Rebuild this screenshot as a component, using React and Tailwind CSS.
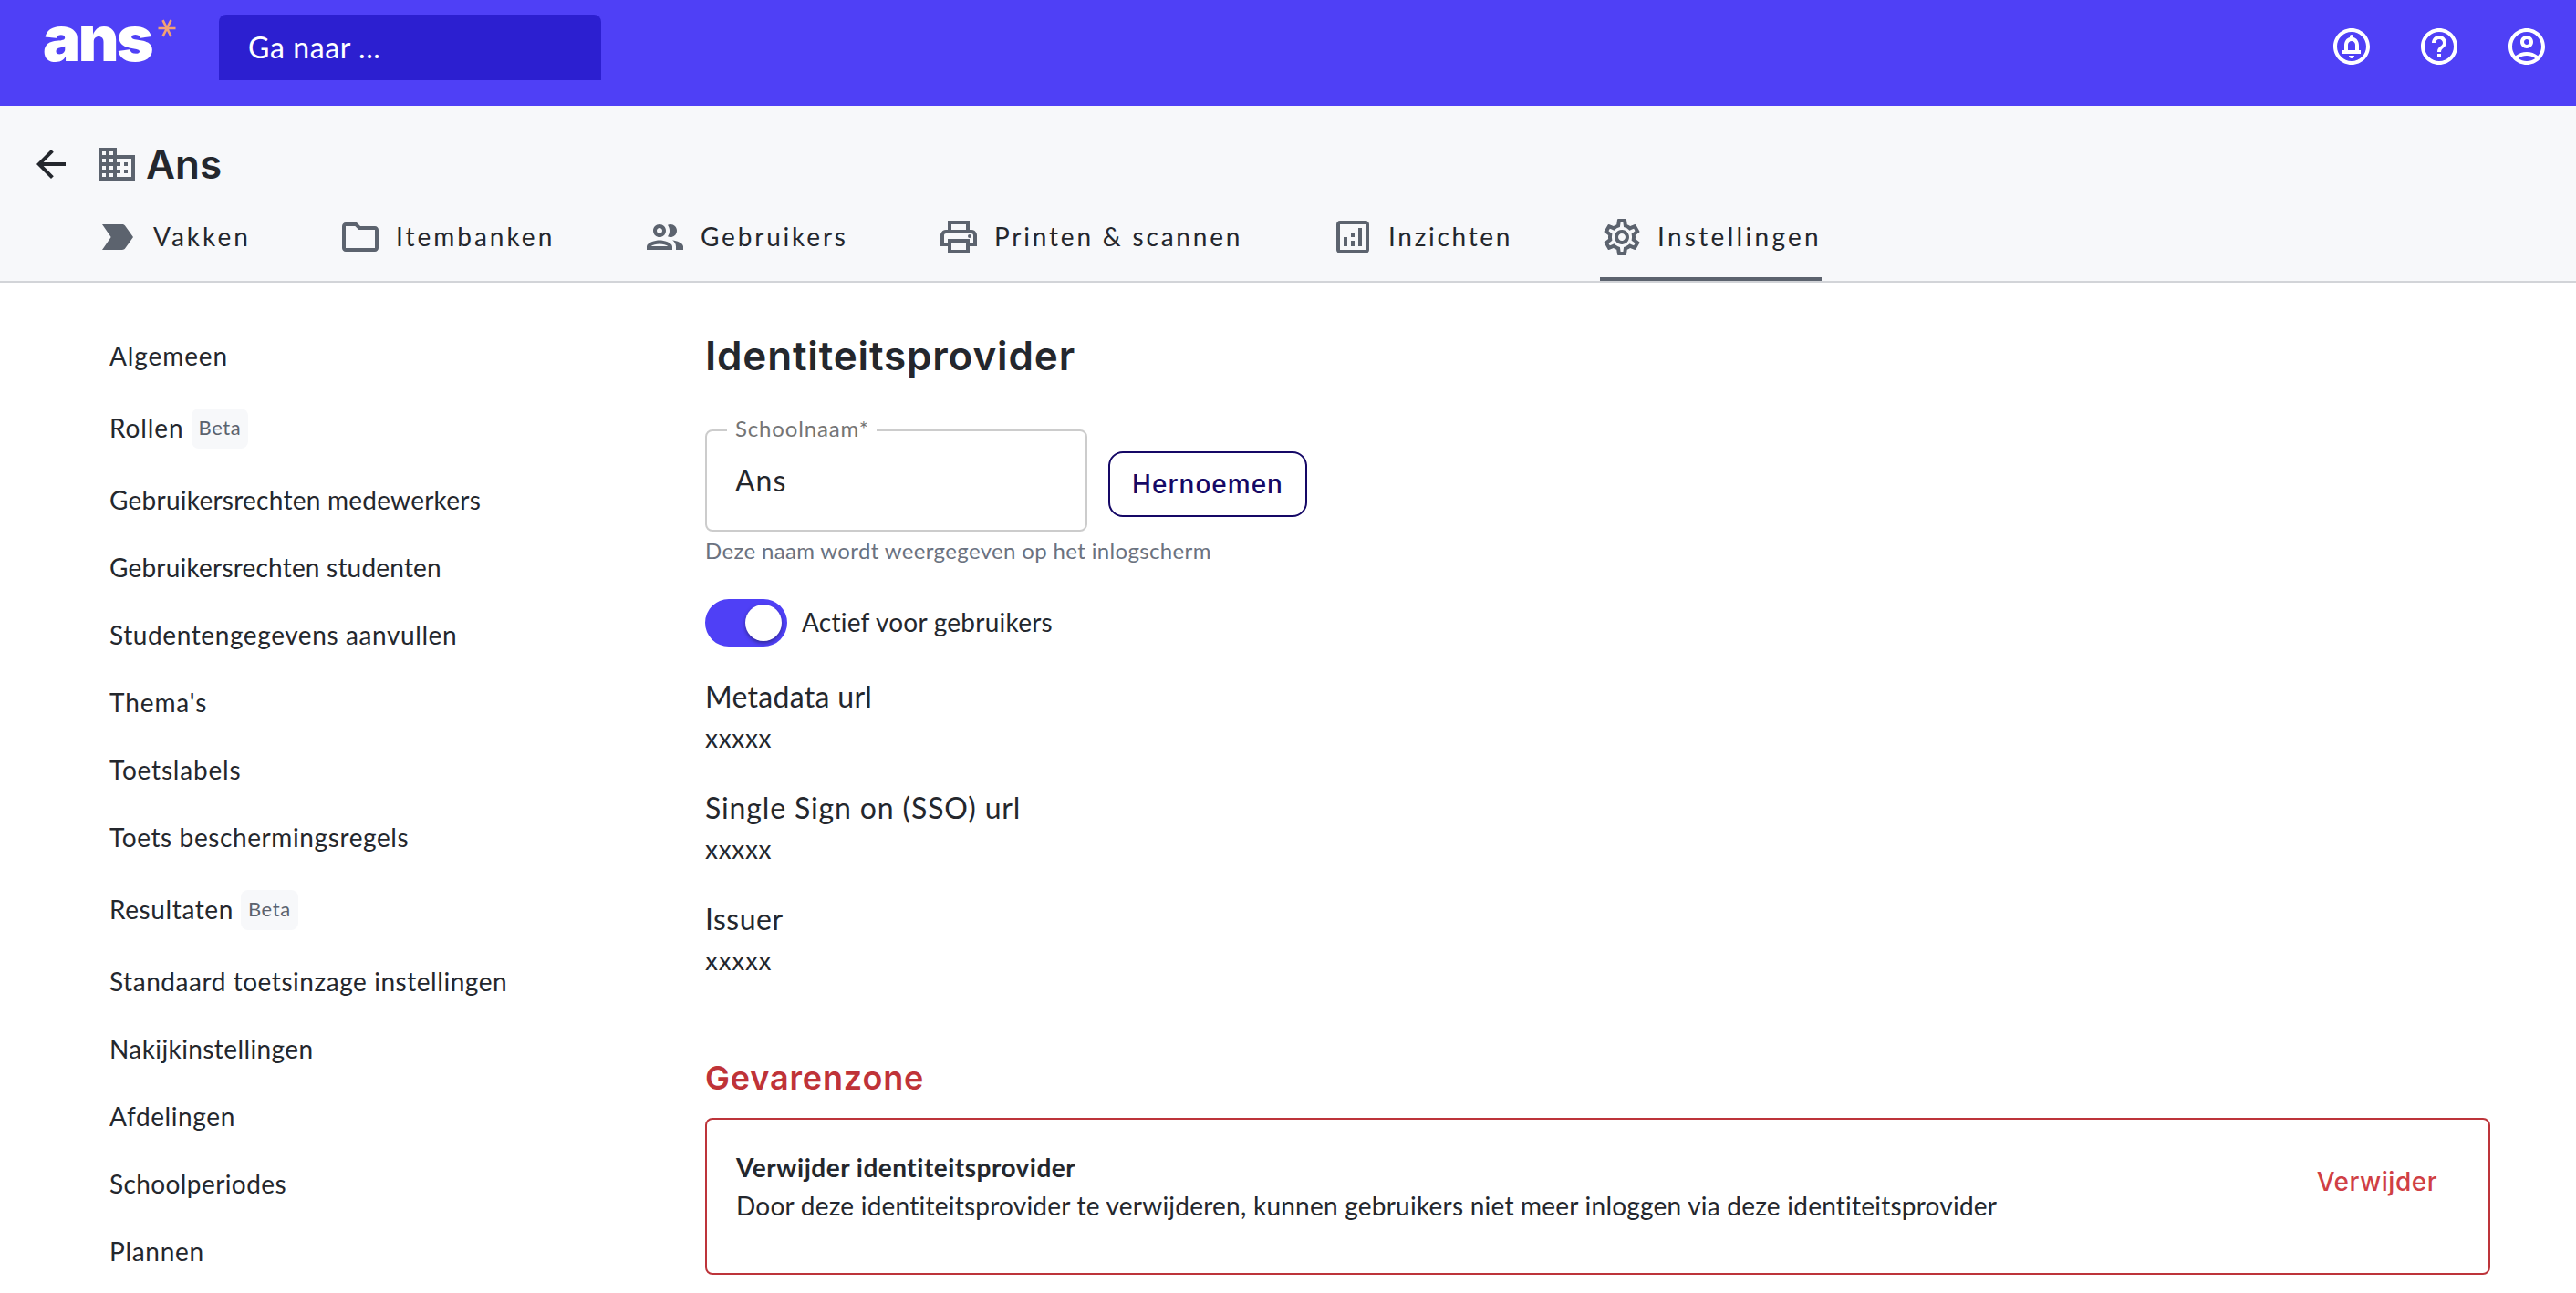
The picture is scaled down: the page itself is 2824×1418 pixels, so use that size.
import { useState } from 'react';
import {
  MdArrowBack,
  MdDomain,
  MdHelpOutline,
  MdLabelImportant,
  MdOutlineAccountCircle,
  MdOutlineAnalytics,
  MdOutlineCircleNotifications,
  MdOutlineFolder,
  MdOutlineGroup,
  MdOutlinePrint,
  MdOutlineSettings,
} from 'react-icons/md';

const tabs = [
  { label: 'Vakken', icon: MdLabelImportant, className: 'w-[170px] tracking-[3px]' },
  { label: 'Itembanken', icon: MdOutlineFolder, className: 'w-[238px] tracking-[3px]' },
  { label: 'Gebruikers', icon: MdOutlineGroup, className: 'w-[226px] tracking-[2.8px]' },
  { label: 'Printen & scannen', icon: MdOutlinePrint, className: 'w-[336px] tracking-[2.8px]' },
  { label: 'Inzichten', icon: MdOutlineAnalytics, className: 'w-[199px] tracking-[2.7px]' },
  { label: 'Instellingen', icon: MdOutlineSettings, className: 'w-[243px] tracking-[3.3px]', active: true },
];

const menu = [
  { label: 'Algemeen', spacing: 'tracking-[0.9px]' },
  { label: 'Rollen', spacing: 'tracking-[0.9px]', beta: true },
  { label: 'Gebruikersrechten medewerkers', spacing: 'tracking-[0.25px]' },
  { label: 'Gebruikersrechten studenten', spacing: 'tracking-[0.2px]' },
  { label: 'Studentengegevens aanvullen', spacing: 'tracking-[0.6px]' },
  { label: "Thema's", spacing: 'tracking-[0.9px]' },
  { label: 'Toetslabels', spacing: 'tracking-[0.8px]' },
  { label: 'Toets beschermingsregels', spacing: 'tracking-[0.6px]' },
  { label: 'Resultaten', spacing: 'tracking-[0.6px]', beta: true },
  { label: 'Standaard toetsinzage instellingen', spacing: 'tracking-[0.55px]' },
  { label: 'Nakijkinstellingen', spacing: 'tracking-[0.4px]' },
  { label: 'Afdelingen', spacing: 'tracking-[0.6px]' },
  { label: 'Schoolperiodes', spacing: 'tracking-[0.4px]' },
  { label: 'Plannen', spacing: 'tracking-[0.7px]' },
];

const details = [
  { title: 'Metadata url', value: 'xxxxx', spacing: 'tracking-[0.3px]' },
  { title: 'Single Sign on (SSO) url', value: 'xxxxx', spacing: 'tracking-[0.85px]' },
  { title: 'Issuer', value: 'xxxxx', spacing: 'tracking-[0.5px]' },
];

function Logo() {
  return (
    <div className="flex w-[146px] items-start text-white">
      <span className="w-[119px] font-['Inter',sans-serif] text-[69px] leading-[85px] font-black tracking-[-2.5px]">
        ans
      </span>
      <svg viewBox="0 0 20 20" className="mt-[21px] ml-[7px] h-5 w-5 shrink-0" stroke="#f2a173" strokeWidth="2.6">
        <path d="M0.5 10h19M5.5 1.2l9 17.6M14.5 1.2l-9 17.6" />
      </svg>
    </div>
  );
}

function Header() {
  return (
    <header className="flex h-[116px] items-start bg-[#4f40f6] pl-[47px] pr-[30px]">
      <Logo />
      <input
        placeholder="Ga naar ..."
        className="mt-4 ml-[47px] h-[72px] w-[419px] rounded-t-lg bg-[#2c1fd0] px-8 pb-[2px] text-[32px] tracking-[0.6px] text-white placeholder:text-white"
      />
      <div className="mt-[27px] ml-auto flex gap-12 text-white">
        <MdOutlineCircleNotifications className="h-12 w-12" />
        <MdHelpOutline className="h-12 w-12" />
        <MdOutlineAccountCircle className="h-12 w-12" />
      </div>
    </header>
  );
}

function SubHeader() {
  return (
    <div className="h-[194px] border-b-2 border-[#d2d4d8] bg-[#f7f8fa] pt-10">
      <div className="flex h-12 items-center pl-8">
        <MdArrowBack className="h-12 w-12" />
        <MdDomain className="ml-6 h-12 w-12 text-[#5c636e]" />
        <h1 className="ml-2 font-['Inter',sans-serif] text-[44px] font-semibold">Ans</h1>
      </div>
      <nav className="mt-8 flex gap-24 pl-[105px]">
        {tabs.map(({ label, icon: Icon, className, active }) => (
          <a
            key={label}
            className={`flex h-[72px] shrink-0 items-center gap-[15px] border-b-4 pb-5 ${className} ${
              active ? 'border-[#5c636e]' : 'border-transparent'
            }`}
          >
            <Icon className="h-12 w-12 shrink-0 text-[#5c636e]" />
            <span className="pb-[3px] text-[28px] whitespace-nowrap">{label}</span>
          </a>
        ))}
      </nav>
    </div>
  );
}

function Sidebar() {
  return (
    <aside className="w-[653px] shrink-0 pt-[43px]">
      {menu.map(({ label, spacing, beta }) => (
        <div key={label} className={`flex items-center ${beta ? 'h-[84px]' : 'h-[74px]'}`}>
          <span className={`text-[28px] ${spacing}`}>{label}</span>
          {beta && (
            <span className="mt-[2px] ml-2 flex h-11 items-center rounded-lg bg-[#f7f8fa] px-2 pb-[3px] text-[22px] tracking-[0.6px] text-[#5c636e]">
              Beta
            </span>
          )}
        </div>
      ))}
    </aside>
  );
}

function Toggle({ checked, onChange }) {
  return (
    <button
      type="button"
      onClick={onChange}
      className={`flex h-[52px] w-[90px] items-center rounded-full px-[6px] ${
        checked ? 'justify-end bg-[#4f40f6]' : 'justify-start bg-gray-400'
      }`}
    >
      <span className="h-10 w-10 rounded-full bg-white shadow-[0_2px_4px_rgba(0,0,0,0.4)]" />
    </button>
  );
}

export default function App() {
  const [name, setName] = useState('Ans');
  const [active, setActive] = useState(true);

  return (
    <div className="h-[1418px] overflow-hidden bg-white font-['Lato',sans-serif] text-[#24272d]">
      <Header />
      <SubHeader />
      <div className="flex pl-[120px]">
        <Sidebar />

        <main className="w-[1957px]">
          <h2 className="mt-[53px] font-['Inter',sans-serif] text-[44px] leading-[54px] font-semibold tracking-[0.85px]">
            Identiteitsprovider
          </h2>

          {/* School name */}
          <div className="mt-[54px] flex items-start gap-[23px]">
            <div className="relative h-[112px] w-[419px] rounded-lg border-2 border-[#ccc]">
              <label className="absolute -top-[19px] left-[22px] bg-white pr-2 pl-[9px] text-2xl tracking-[0.85px] text-[#757575]">
                Schoolnaam*
              </label>
              <input
                value={name}
                onChange={(e) => setName(e.target.value)}
                className="h-full w-full px-[31px] pb-[2px] text-[32px] tracking-[1px] outline-none"
              />
            </div>
            <button className="mt-6 h-[72px] w-[218px] rounded-2xl border-2 border-[#150866] font-['Inter',sans-serif] text-[28px] font-medium tracking-[1px] text-[#150866]">
              Hernoemen
            </button>
          </div>
          <p className="mt-[5px] text-2xl tracking-[0.35px] text-[#6b7280]">
            Deze naam wordt weergegeven op het inlogscherm
          </p>

          <div className="mt-[37px] flex items-center gap-4">
            <Toggle checked={active} onChange={() => setActive(!active)} />
            <span className="pb-[2px] text-[28px] tracking-[0.25px]">Actief voor gebruikers</span>
          </div>

          <div className="mt-[31px]">
            {details.map(({ title, value, spacing }) => (
              <div key={title} className="h-[122px]">
                <h3 className={`text-[32px] leading-[48px] ${spacing}`}>{title}</h3>
                <p className="text-[28px] leading-[42px] tracking-[0.7px]">{value}</p>
              </div>
            ))}
          </div>

          {/* Danger zone */}
          <h3 className="mt-[54px] font-['Inter',sans-serif] text-[36px] leading-[44px] font-semibold tracking-[0.85px] text-[#bf3338]">
            Gevarenzone
          </h3>
          <div className="mt-[22px] flex h-[172px] items-start justify-between rounded-lg border-2 border-[#bd343a] pt-[31px] pr-14 pl-8">
            <div className="text-[28px] leading-[42px]">
              <p className="font-bold tracking-[0.5px]">Verwijder identiteitsprovider</p>
              <p className="tracking-[0.23px]">
                Door deze identiteitsprovider te verwijderen, kunnen gebruikers niet meer inloggen via deze
                identiteitsprovider
              </p>
            </div>
            <button className="mt-4 font-['Inter',sans-serif] text-[28px] leading-[42px] font-medium tracking-[0.5px] text-[#d03f45]">
              Verwijder
            </button>
          </div>
        </main>
      </div>
    </div>
  );
}
